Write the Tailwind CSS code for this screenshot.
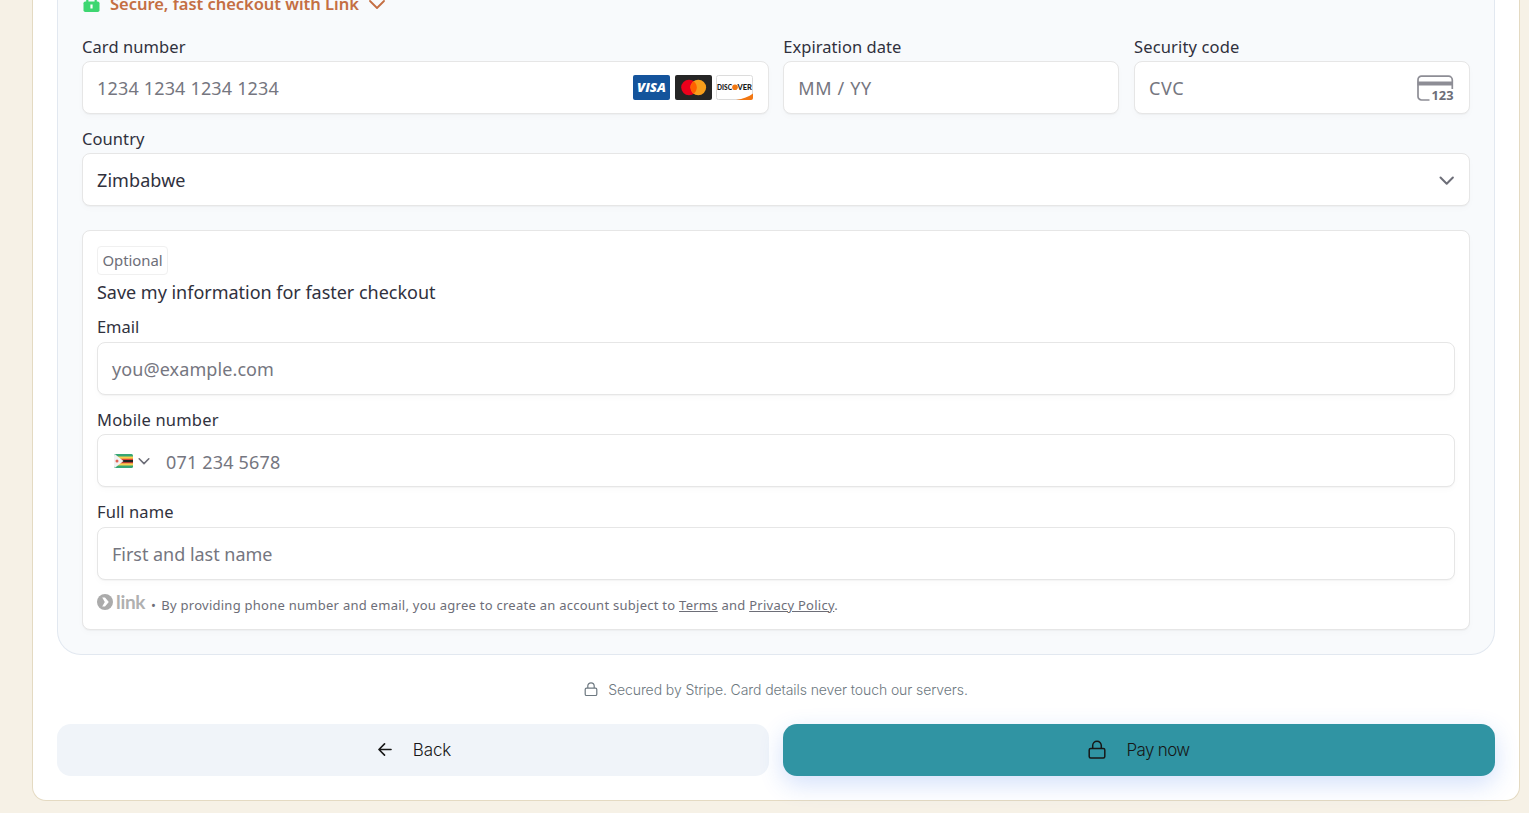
<!DOCTYPE html>
<html lang="en">
<head>
<meta charset="utf-8">
<title>Checkout</title>
<script src="https://cdn.jsdelivr.net/npm/@tailwindcss/browser@4"></script>
</head>
<body class="h-screen overflow-hidden bg-[#f6f1e6] font-['Noto_Sans',sans-serif] text-[#30313d]">
<main class="ml-8 h-[801px] w-[1488px] rounded-b-[14px] border border-t-0 border-[#e4dac2] bg-white px-6">
  <section class="h-[655px] rounded-b-3xl border border-t-0 border-[#e2e8f0] bg-[#f8fafc] px-6">
    <div class="flex h-4 items-end">
      <div class="flex h-6 items-center text-[#c46f43]">
        <svg class="ml-[1px] h-[18px] w-[17px]" viewBox="0 0 17 18"><path d="M4.300 8V5a4.200 4.200 0 0 1 8.400 0v3" fill="none" stroke="#3ed671" stroke-width="2.200"/><rect x=".5" y="6.500" width="16" height="10.500" rx="1.800" fill="#3ed671"/><path d="M8.500 9.500v4" stroke="#fff" stroke-width="2.200"/></svg>
        <span class="ml-[10px] text-[16.5px] font-semibold whitespace-nowrap tracking-[-0.03px]">Secure, fast checkout with Link</span>
        <svg class="ml-[10px] h-4 w-4" viewBox="0 0 16 16" fill="none" stroke="currentColor" stroke-width="1.800" stroke-linecap="round" stroke-linejoin="round"><path d="M1 5l7 7 7-7"/></svg>
      </div>
    </div>
    <div class="grid grid-cols-[686.67px_1fr_1fr] gap-x-[14.67px] pt-5">
      <div>
        <div class="mb-[3px] text-[16.5px] leading-[22px] tracking-[0.08px]">Card number</div>
        <div class="flex h-[53px] items-center rounded-[8px] border border-[#e6e6e6] bg-white pr-[15px] pl-[14px] shadow-[0_1px_1px_rgba(0,0,0,0.03),0_3px_6px_rgba(0,0,0,0.02)]">
          <span class="flex-1 pt-[2px] text-[18px] tracking-[0.17px] text-[#757680]">1234 1234 1234 1234</span>
          <div class="flex gap-[5px]">
            <svg class="h-[25px] w-[37px]" viewBox="0 0 37 25"><rect width="37" height="25" rx="2" fill="#14549c"/><text x="4" y="17" font-family="Open Sans" font-size="13" font-weight="800" font-style="italic" fill="#fff" textLength="29" lengthAdjust="spacingAndGlyphs">VISA</text></svg>
            <svg class="h-[25px] w-[37px]" viewBox="0 0 37 25"><rect width="37" height="25" rx="2" fill="#252525"/><circle cx="14" cy="12.500" r="7.800" fill="#eb001b"/><circle cx="23.300" cy="12.500" r="7.800" fill="#f79e1b"/><path d="M18.650 6.240a7.800 7.800 0 0 1 0 12.520a7.800 7.800 0 0 1 0-12.520z" fill="#ff5f00"/></svg>
            <svg class="-ml-[1px] h-[25px] w-[37px]" viewBox="0 0 37 25"><rect x=".5" y=".5" width="36" height="24" rx="2" fill="#fff" stroke="#dcdcdc"/><path d="M20 25c7-1.200 13-3.300 17-6.500V23a2 2 0 0 1-2 2z" fill="#f27712"/><g font-family="Lato" font-size="7.500" font-weight="900" fill="#1a1a1a"><text x="1" y="15" textLength="15" lengthAdjust="spacingAndGlyphs">DISC</text><text x="21.500" y="15" textLength="14.500" lengthAdjust="spacingAndGlyphs">VER</text></g><circle cx="19" cy="12.300" r="2.800" fill="#f27712"/></svg>
          </div>
        </div>
      </div>
      <div>
        <div class="mb-[3px] text-[16.5px] leading-[22px] tracking-[0.04px]">Expiration date</div>
        <div class="flex h-[53px] items-center rounded-[8px] border border-[#e6e6e6] bg-white px-[14px] shadow-[0_1px_1px_rgba(0,0,0,0.03),0_3px_6px_rgba(0,0,0,0.02)]">
          <span class="pt-[2px] text-[18px] tracking-[0.65px] text-[#757680]">MM / YY</span>
        </div>
      </div>
      <div>
        <div class="mb-[3px] text-[16.5px] leading-[22px] tracking-[0.15px]">Security code</div>
        <div class="flex h-[53px] items-center justify-between rounded-[8px] border border-[#e6e6e6] bg-white pr-[15px] pl-[14px] shadow-[0_1px_1px_rgba(0,0,0,0.03),0_3px_6px_rgba(0,0,0,0.02)]">
          <span class="pt-[2px] text-[18px] tracking-[0.6px] text-[#757680]">CVC</span>
          <svg class="mt-[1px] h-[27px] w-[38px]" viewBox="0 0 38 27"><path d="M13.500 25H5.500a3.500 3.500 0 0 1-3.500-3.500V4.700A3.500 3.500 0 0 1 5.500 1.200h27A3.800 3.800 0 0 1 36.300 5v9" fill="none" stroke="#8d8d95" stroke-width="1.700"/><path d="M1.500 8.500h35.500" stroke="#8d8d95" stroke-width="3.800"/><text x="15.500" y="25" font-family="Open Sans" font-size="12" font-weight="700" fill="#6d6e78" textLength="22" lengthAdjust="spacingAndGlyphs">123</text></svg>
        </div>
      </div>
    </div>
    <div class="mt-[14px] mb-[3px] text-[16.5px] leading-[22px] tracking-[0.08px]">Country</div>
    <div class="flex h-[53px] items-center justify-between rounded-[8px] border border-[#e6e6e6] bg-white px-[14px] shadow-[0_1px_1px_rgba(0,0,0,0.03),0_3px_6px_rgba(0,0,0,0.02)]">
      <span class="pt-[2px] text-[18px] tracking-[0.08px]">Zimbabwe</span>
      <svg class="h-4 w-4" viewBox="0 0 16 16" fill="none" stroke="#6d6e78" stroke-width="2" stroke-linecap="round" stroke-linejoin="round"><path d="M1.500 5.500L7.700 11.700l6.200-6.200"/></svg>
    </div>

    <div class="mt-6 h-[400px] rounded-[8px] border border-[#e6e6e6] bg-white px-[14px] pt-[15px] shadow-[0_1px_1px_rgba(0,0,0,0.03),0_3px_6px_rgba(0,0,0,0.02)]">
      <div class="flex h-[29px] w-[71px] items-center justify-center rounded-[4px] border border-[#f0f0f0] text-[14.900px] tracking-[-0.05px] text-[#6d6e78]">Optional</div>
      <div class="mt-[5px] text-[18px] leading-[25px] tracking-[-0.02px]">Save my information for faster checkout</div>
      <div class="mt-[11px] mb-[4px] text-[16.5px] leading-[22px] tracking-[-0.05px]">Email</div>
      <div class="flex h-[53px] items-center rounded-[8px] border border-[#e6e6e6] bg-white px-[14px] shadow-[0_1px_1px_rgba(0,0,0,0.03),0_3px_6px_rgba(0,0,0,0.02)]">
        <span class="pt-[2px] text-[18px] tracking-[0.09px] text-[#757680]">you@example.com</span>
      </div>
      <div class="mt-[13px] mb-[3px] text-[16.5px] leading-[23px] tracking-[0.18px]">Mobile number</div>
      <div class="flex h-[53px] items-center rounded-[8px] border border-[#e6e6e6] bg-white px-[16px] shadow-[0_1px_1px_rgba(0,0,0,0.03),0_3px_6px_rgba(0,0,0,0.02)]">
        <svg class="h-[14px] w-[19px]" viewBox="0 0 19 14"><rect width="19" height="14" rx="1.500" fill="#35a674"/><path d="M0 2.500h19v9H0z" fill="#f8d050"/><path d="M4 4.700h15v4.600H4z" fill="#dc4437"/><path d="M4 6h15v2.200H4z" fill="#222"/><path d="M1 .3l8.500 6.700L1 13.700Q0 13.700 0 12V2Q0 .3 1 .3z" fill="#f1f1f3"/><circle cx="3" cy="7" r="1.500" fill="#e06050"/></svg>
        <svg class="ml-[5px] h-3 w-3" viewBox="0 0 12 12" fill="none" stroke="#6d6e78" stroke-width="1.600" stroke-linecap="round" stroke-linejoin="round"><path d="M1.200 3.800L6 8.600l4.800-4.800"/></svg>
        <span class="ml-4 pt-[3px] text-[18px] tracking-[0.17px] text-[#757680]">071 234 5678</span>
      </div>
      <div class="mt-[13px] mb-[4px] text-[16.5px] leading-[23px] tracking-[0.1px]">Full name</div>
      <div class="flex h-[53px] items-center rounded-[8px] border border-[#e6e6e6] bg-white px-[14px] shadow-[0_1px_1px_rgba(0,0,0,0.03),0_3px_6px_rgba(0,0,0,0.02)]">
        <span class="pt-[2px] text-[18px] tracking-[-0.03px] text-[#757680]">First and last name</span>
      </div>
      <div class="mt-[12px] flex h-6 items-start text-[13px] text-[#6d6e78]">
        <svg class="mt-[2px] h-4 w-4" viewBox="0 0 16 16"><circle cx="8" cy="8" r="8" fill="#ababab"/><path d="M5.200 3.500h2.800l3.800 4.500-3.800 4.500H5.200L7.800 8z" fill="#fff"/></svg>
        <span class="ml-[3px] w-[30px] font-['Lato',sans-serif] text-[19px] leading-[20px] font-bold tracking-[-0.3px] text-[#b0b0b0]">link</span>
        <span class="ml-[5px] leading-[26px] whitespace-nowrap tracking-[0.26px]"><span class="mr-[1.5px]">•</span> By providing phone number and email, you agree to create an account subject to <a class="underline">Terms</a> and <a class="underline">Privacy Policy</a>.</span>
      </div>
    </div>
  </section>

  <div class="flex h-[69px] items-center justify-center font-['Inter',sans-serif] text-[14px] font-light text-[#64748b]">
    <svg class="mr-[10px] h-[15px] w-[14px]" viewBox="0 0 14 15" fill="none" stroke="#6d7880" stroke-width="1.200"><rect x="1.200" y="6.200" width="11.600" height="7.300" rx="1.300"/><path d="M3.800 6V4a3.200 3.200 0 0 1 6.400 0v2"/></svg>
    <span class="tracking-[-0.09px] whitespace-nowrap text-[#6d7880]">Secured by Stripe. Card details never touch our servers.</span>
  </div>

  <div class="grid grid-cols-2 gap-[14px] font-['Inter',sans-serif] text-[17px] font-light text-[#171717]">
    <button class="flex h-[52px] items-center justify-center rounded-[14px] bg-[#f0f4f9] pl-[3px]">
      <svg class="mr-[21px] mb-[1px] h-[13px] w-[14px]" viewBox="0 0 15 14" fill="none" stroke="currentColor" stroke-width="1.700" stroke-linecap="round" stroke-linejoin="round"><path d="M14 7H1.500M7 1L1 7l6 6"/></svg>
      <span class="pt-[2px] tracking-[-0.15px]">Back</span>
    </button>
    <button class="flex h-[52px] items-center justify-center rounded-[14px] bg-[#3094a3] shadow-[0_8px_24px_rgba(37,99,235,0.2)]">
      <svg class="mr-5 h-5 w-[18px]" viewBox="0 0 18 20" fill="none" stroke="currentColor" stroke-width="1.500"><rect x="1.200" y="8.500" width="15.600" height="9.500" rx="1.500"/><path d="M4.700 8.300V5.500a4.300 4.300 0 0 1 8.600 0v2.800"/></svg>
      <span class="pt-[2px] tracking-[-0.65px]">Pay now</span>
    </button>
  </div>
</main>
</body>
</html>
